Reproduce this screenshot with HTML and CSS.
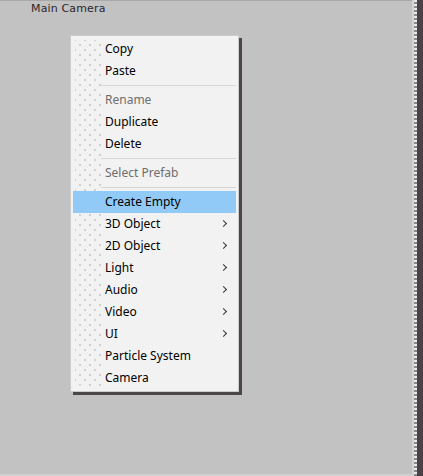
FILE: index.html
```html
<!DOCTYPE html>
<html>
<head>
<meta charset="utf-8">
<link rel="stylesheet" href="styles.css">
</head>
<body>
<div class="app">
  <div class="hierarchy">
    <div class="row">Main Camera</div>
  </div>
  <div class="edge">
    <div class="edge-light"></div>
    <div class="edge-dots"></div>
    <div class="edge-dark"></div>
  </div>
</div>

<div class="menu">
  <div class="gutter"></div>
  <div class="item">Copy</div>
  <div class="item">Paste</div>
  <div class="sep"></div>
  <div class="item disabled">Rename</div>
  <div class="item">Duplicate</div>
  <div class="item">Delete</div>
  <div class="sep"></div>
  <div class="item disabled">Select Prefab</div>
  <div class="sep"></div>
  <div class="item active">Create Empty</div>
  <div class="item sub">3D Object<span class="arrow"></span></div>
  <div class="item sub">2D Object<span class="arrow"></span></div>
  <div class="item sub">Light<span class="arrow"></span></div>
  <div class="item sub">Audio<span class="arrow"></span></div>
  <div class="item sub">Video<span class="arrow"></span></div>
  <div class="item sub">UI<span class="arrow"></span></div>
  <div class="item">Particle System</div>
  <div class="item">Camera</div>
</div>
</body>
</html>
```

FILE: styles.css
```css
html, body {
  margin: 0;
  padding: 0;
  width: 423px;
  height: 476px;
  overflow: hidden;
  background: #c2c2c2;
}

.app {
  display: flex;
  height: 476px;
}

.hierarchy {
  flex: 1;
  border-top: 1px solid #a9a9a9;
  border-bottom: 2px solid #d0d0d0;
  box-sizing: border-box;
  height: 476px;
}

.row {
  font-family: "DejaVu Sans", sans-serif;
  font-size: 11px;
  color: #2a2627;
  padding-left: 31px;
  padding-top: 1px;
  line-height: 14px;
  letter-spacing: 0.15px;
}

.edge {
  display: flex;
  width: 11px;
}

.edge-light {
  width: 2px;
  background: #d2d2d2;
}

.edge-dots {
  width: 3px;
  background: repeating-linear-gradient(to bottom, #e8e8e8 0 2px, #8c8c8c 2px 4px);
}

.edge-dark {
  flex: 1;
  background: #4b4146;
}

.menu {
  position: absolute;
  left: 70px;
  top: 35px;
  width: 167px;
  padding: 2px 0;
  background: #f2f2f2;
  border: 1px solid #cccccc;
  box-shadow: 3px 3px 0 #4d4649;
  font-family: "Noto Sans", sans-serif;
  font-size: 12px;
  color: #000;
}

.gutter {
  position: absolute;
  left: 4px;
  top: 4px;
  bottom: 4px;
  width: 26px;
  background-image:
    radial-gradient(circle, #cfcfcf 0.7px, transparent 0.9px),
    radial-gradient(circle, #cfcfcf 0.7px, transparent 0.9px);
  background-size: 10px 10px, 10px 10px;
  background-position: 0 0, 5px 5px;
  pointer-events: none;
}

.item {
  position: relative;
  height: 22px;
  line-height: 22px;
  padding-left: 32px;
  margin: 0 2px;
  display: flex;
  align-items: center;
}

.item.disabled {
  color: #6d6d6d;
}

.item.active {
  background: #91c9f7;
}

.arrow {
  position: absolute;
  right: 10px;
  top: 8px;
  width: 4px;
  height: 4px;
  border-right: 1px solid #333;
  border-top: 1px solid #333;
  transform: rotate(45deg);
}

.sep {
  height: 1px;
  margin: 3px 2px 3px 30px;
  background: #d7d7d7;
}
```
